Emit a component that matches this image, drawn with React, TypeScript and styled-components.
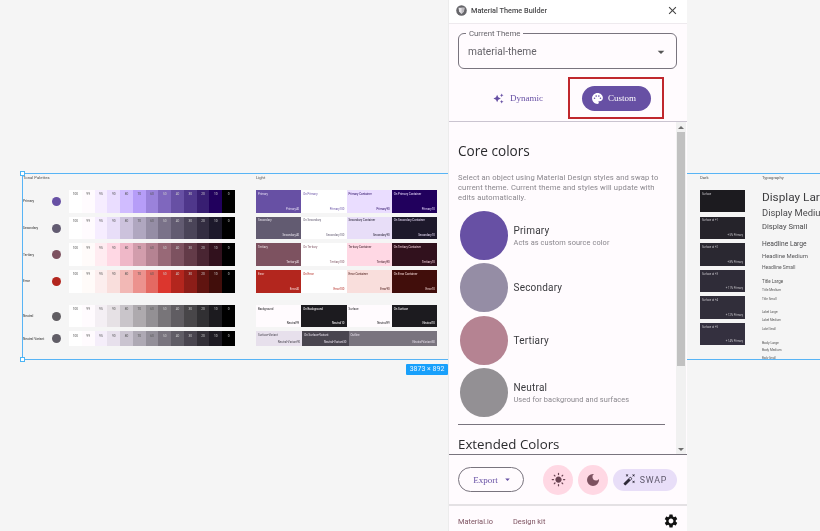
import React from 'react'
import styled, { createGlobalStyle } from 'styled-components'
import {
  MdAutoAwesome,
  MdPalette,
  MdLightMode,
  MdDarkMode,
  MdAutoFixHigh,
  MdSettings,
  MdClose,
  MdArrowDropDown,
} from 'react-icons/md'

const tones = ['100', '99', '95', '90', '80', '70', '60', '50', '40', '30', '20', '10', '0']

type Palette = { name: string; dot: string; colors: string[]; short?: boolean; spaced?: boolean }

const palettes: Palette[] = [
  { name: 'Primary', dot: '#6750a4', colors: ['#ffffff', '#fffbfe', '#f6edff', '#eaddff', '#d0bcff', '#b69df8', '#9a82db', '#7f67be', '#6750a4', '#4f378b', '#381e72', '#21005d', '#000000'] },
  { name: 'Secondary', dot: '#625b71', colors: ['#ffffff', '#fffbfe', '#f6edff', '#e8def8', '#ccc2dc', '#b0a7c0', '#958da5', '#7a7289', '#625b71', '#4a4458', '#332d41', '#1d192b', '#000000'] },
  { name: 'Tertiary', dot: '#7d5260', colors: ['#ffffff', '#fffbfa', '#ffecf1', '#ffd8e4', '#efb8c8', '#d29dac', '#b58392', '#986977', '#7d5260', '#633b48', '#492532', '#31111d', '#000000'] },
  { name: 'Error', dot: '#b3261e', colors: ['#ffffff', '#fffbf9', '#fceeee', '#f9dedc', '#f2b8b5', '#ec928e', '#e46962', '#dc362e', '#b3261e', '#8c1d18', '#601410', '#410e0b', '#000000'] },
  { name: 'Neutral', dot: '#605d62', spaced: true, colors: ['#ffffff', '#fffbfe', '#f4eff4', '#e6e1e5', '#c9c5ca', '#aeaaae', '#939094', '#787579', '#605d62', '#484649', '#313033', '#1c1b1f', '#000000'] },
  { name: 'Neutral Variant', dot: '#605d66', short: true, colors: ['#ffffff', '#fffbfe', '#f5eefa', '#e7e0ec', '#cac4d0', '#aea9b4', '#938f99', '#79747e', '#605d66', '#49454f', '#322f37', '#1d1a22', '#000000'] },
]

type Role = { name: string; tone: string; bg: string; fg: string; wide?: boolean }
type RoleRow = { roles: Role[]; short?: boolean; spaced?: boolean }

const lightRows: RoleRow[] = [
  { roles: [
    { name: 'Primary', tone: 'Primary40', bg: '#6750a4', fg: '#e6def5' },
    { name: 'On Primary', tone: 'Primary100', bg: '#ffffff', fg: '#6750a4' },
    { name: 'Primary Container', tone: 'Primary90', bg: '#eaddff', fg: '#21005d' },
    { name: 'On Primary Container', tone: 'Primary10', bg: '#21005d', fg: '#eaddff' },
  ] },
  { roles: [
    { name: 'Secondary', tone: 'Secondary40', bg: '#625b71', fg: '#e6e2ec' },
    { name: 'On Secondary', tone: 'Secondary100', bg: '#ffffff', fg: '#625b71' },
    { name: 'Secondary Container', tone: 'Secondary90', bg: '#e8def8', fg: '#1d192b' },
    { name: 'On Secondary Container', tone: 'Secondary10', bg: '#1d192b', fg: '#e8def8' },
  ] },
  { roles: [
    { name: 'Tertiary', tone: 'Tertiary40', bg: '#7d5260', fg: '#f0e4e8' },
    { name: 'On Tertiary', tone: 'Tertiary100', bg: '#ffffff', fg: '#7d5260' },
    { name: 'Tertiary Container', tone: 'Tertiary90', bg: '#ffd8e4', fg: '#31111d' },
    { name: 'On Tertiary Container', tone: 'Tertiary10', bg: '#31111d', fg: '#ffd8e4' },
  ] },
  { roles: [
    { name: 'Error', tone: 'Error40', bg: '#b3261e', fg: '#f7dedc' },
    { name: 'On Error', tone: 'Error100', bg: '#ffffff', fg: '#b3261e' },
    { name: 'Error Container', tone: 'Error90', bg: '#f9dedc', fg: '#410e0b' },
    { name: 'On Error Container', tone: 'Error10', bg: '#410e0b', fg: '#f9dedc' },
  ] },
  { spaced: true, roles: [
    { name: 'Background', tone: 'Neutral99', bg: '#fffbfe', fg: '#1c1b1f' },
    { name: 'On Background', tone: 'Neutral10', bg: '#1c1b1f', fg: '#fffbfe' },
    { name: 'Surface', tone: 'Neutral99', bg: '#fffbfe', fg: '#1c1b1f' },
    { name: 'On Surface', tone: 'Neutral10', bg: '#1c1b1f', fg: '#fffbfe' },
  ] },
  { short: true, roles: [
    { name: 'Surface-Variant', tone: 'Neutral-Variant90', bg: '#e7e0ec', fg: '#49454f' },
    { name: 'On Surface-Variant', tone: 'Neutral-Variant30', bg: '#49454f', fg: '#e7e0ec' },
    { name: 'Outline', tone: 'Neutral-Variant50', bg: '#79747e', fg: '#e7e0ec', wide: true },
  ] },
]

const darkSurfaces = [
  { name: 'Surface', tint: '', bg: '#1c1b1f' },
  { name: 'Surface at +1', tint: '+ 5% Primary', bg: '#25232a' },
  { name: 'Surface at +2', tint: '+ 8% Primary', bg: '#2a2831' },
  { name: 'Surface at +3', tint: '+ 11% Primary', bg: '#2f2c38' },
  { name: 'Surface at +4', tint: '+ 12% Primary', bg: '#312e3a' },
  { name: 'Surface at +5', tint: '+ 14% Primary', bg: '#34303f' },
]

const typeScale = [
  { name: 'Display Large', size: 11.8, top: 0, color: '#3d3d3f' },
  { name: 'Display Medium', size: 9.4, top: 3.25, color: '#4a4a4c' },
  { name: 'Display Small', size: 7.6, top: 3.8, color: '#4a4a4c' },
  { name: 'Headline Large', size: 6.7, top: 8.45, color: '#4a4a4c' },
  { name: 'Headline Medium', size: 5.9, top: 4.45, color: '#58585a' },
  { name: 'Headline Small', size: 5, top: 4.45, color: '#58585a' },
  { name: 'Title Large', size: 4.5, top: 9.25, color: '#555' },
  { name: 'Title Medium', size: 3.3, top: 4.3, color: '#555' },
  { name: 'Title Small', size: 3.1, top: 5.2, color: '#555' },
  { name: 'Label Large', size: 3, top: 9.4, color: '#555' },
  { name: 'Label Medium', size: 3, top: 4.6, color: '#555' },
  { name: 'Label Small', size: 2.7, top: 4.8, color: '#555' },
  { name: 'Body Large', size: 3.4, top: 9.5, color: '#555' },
  { name: 'Body Medium', size: 3.2, top: 4.2, color: '#555' },
  { name: 'Body Small', size: 2.8, top: 4.5, color: '#555' },
]

const coreColors = [
  { name: 'Primary', note: 'Acts as custom source color', color: '#6750a4' },
  { name: 'Secondary', note: '', color: '#958da5' },
  { name: 'Tertiary', note: '', color: '#b58392' },
  { name: 'Neutral', note: 'Used for background and surfaces', color: '#939094' },
]

const App: React.FC = () => {
  return (
    <>
      <GlobalStyle />
      <StyledPage>
        <StyledCanvas>
          <StyledFrame>
            <StyledFrameContent>
              <StyledColumn $width={212} $gap={21}>
                <StyledColumnTitle>Tonal Palettes</StyledColumnTitle>
                {palettes.map((p) => (
                  <StyledPaletteRow key={p.name} $short={p.short} $spaced={p.spaced}>
                    <StyledPaletteName>{p.name}</StyledPaletteName>
                    <StyledPaletteDot $color={p.dot} />
                    <StyledTones>
                      {p.colors.map((c, i) => (
                        <StyledTone key={tones[i]} $color={c} $dark={i >= 7}>{tones[i]}</StyledTone>
                      ))}
                    </StyledTones>
                  </StyledPaletteRow>
                ))}
              </StyledColumn>
              <StyledColumn $width={181} $gap={263}>
                <StyledColumnTitle>Light</StyledColumnTitle>
                {lightRows.map((row) => (
                  <StyledRoleRow key={row.roles[0].name} $short={row.short} $spaced={row.spaced}>
                    {row.roles.map((r) => (
                      <StyledRole key={r.name} $bg={r.bg} $fg={r.fg} $wide={r.wide}>
                        <span>{r.name}</span>
                        <StyledRoleTone>{r.tone}</StyledRoleTone>
                      </StyledRole>
                    ))}
                  </StyledRoleRow>
                ))}
              </StyledColumn>
              <StyledColumn $width={45} $gap={17}>
                <StyledColumnTitle>Dark</StyledColumnTitle>
                {darkSurfaces.map((s) => (
                  <StyledSurface key={s.name} $bg={s.bg}>
                    <span>{s.name}</span>
                    <StyledRoleTone>{s.tint}</StyledRoleTone>
                  </StyledSurface>
                ))}
              </StyledColumn>
              <StyledTypeColumn>
                <StyledColumnTitle>Typography</StyledColumnTitle>
                <StyledTypeList>
                  {typeScale.map((t) => (
                    <StyledTypeItem key={t.name} $size={t.size} $top={t.top} $color={t.color}>{t.name}</StyledTypeItem>
                  ))}
                </StyledTypeList>
              </StyledTypeColumn>
            </StyledFrameContent>
            <StyledHandle $place="top" />
            <StyledHandle $place="bottom" />
            <StyledSizeBadge>3873 × 892</StyledSizeBadge>
          </StyledFrame>
        </StyledCanvas>

        <StyledPanel>
          <StyledHeader>
            <StyledLogo viewBox="0 0 24 24">
              <circle cx="12" cy="12" r="11.5" fill="#66666a" />
              <path d="M5.5 6h13l-1.2 8-5.3 5.5L6.700 14z" fill="#e6e4e8" />
              <path d="M12 6h6.500l-1.200 8-5.300 5.500z" fill="#bdbbc0" />
            </StyledLogo>
            <StyledTitle>Material Theme Builder</StyledTitle>
            <StyledClose><MdClose size={13} /></StyledClose>
          </StyledHeader>

          <StyledSelectArea>
            <StyledSelect>
              <StyledSelectLabel>Current Theme</StyledSelectLabel>
              <span>material-theme</span>
              <StyledSelectArrow><MdArrowDropDown size={16} /></StyledSelectArrow>
            </StyledSelect>
          </StyledSelectArea>

          <StyledModes>
            <StyledDynamic>
              <MdAutoAwesome size={11} />
              Dynamic
            </StyledDynamic>
            <StyledCustomHighlight>
              <StyledCustom>
                <MdPalette size={13} />
                Custom
              </StyledCustom>
            </StyledCustomHighlight>
          </StyledModes>

          <StyledScrollArea>
            <StyledScrollContent>
              <StyledHeading>Core colors</StyledHeading>
              <StyledIntro>
                Select an object using Material Design styles and swap to current theme. Current theme and styles will update with edits automatically.
              </StyledIntro>
              <StyledCoreList>
                {coreColors.map((c) => (
                  <StyledCoreRow key={c.name}>
                    <StyledCoreCircle $color={c.color} />
                    <div>
                      <StyledCoreName>{c.name}</StyledCoreName>
                      {c.note && <StyledCoreNote>{c.note}</StyledCoreNote>}
                    </div>
                  </StyledCoreRow>
                ))}
              </StyledCoreList>
              <StyledDivider />
              <StyledExtended>Extended Colors</StyledExtended>
            </StyledScrollContent>
            <StyledScrollBar>
              <StyledScrollArrow><StyledArrowUp /></StyledScrollArrow>
              <StyledScrollTrack><StyledScrollThumb /></StyledScrollTrack>
              <StyledScrollArrow><StyledArrowDown /></StyledScrollArrow>
            </StyledScrollBar>
          </StyledScrollArea>

          <StyledActions>
            <StyledExport>
              Export
              <MdArrowDropDown size={11} />
            </StyledExport>
            <StyledRoundButtons>
              <StyledRoundButton><MdLightMode size={15} color="#6b4453" /></StyledRoundButton>
              <StyledRoundButton><MdDarkMode size={16} /></StyledRoundButton>
              <StyledSwap>
                <MdAutoFixHigh size={13} color="#2e2a38" />
                SWAP
              </StyledSwap>
            </StyledRoundButtons>
          </StyledActions>

          <StyledFooter>
            <StyledFooterLink>Material.io</StyledFooterLink>
            <StyledFooterLink>Design kit</StyledFooterLink>
            <StyledGear><MdSettings size={16} /></StyledGear>
          </StyledFooter>
        </StyledPanel>
      </StyledPage>
    </>
  )
}

const GlobalStyle = createGlobalStyle`
  html, body {
    margin: 0;
    padding: 0;
    background: #f5f5f5;
    overflow: hidden;
  }
  * {
    box-sizing: border-box;
  }
`

// the reference is a scaled screenshot, everything in it is a little soft
const StyledPage = styled.div`
  position: relative;
  width: 820px;
  height: 531px;
  overflow: hidden;
  font-family: Roboto, "Liberation Sans", sans-serif;
  filter: blur(0.3px);
`

const StyledCanvas = styled.div`
  position: absolute;
  inset: 0;
  background: #f5f5f5;
`

const StyledFrame = styled.div`
  position: absolute;
  left: 22px;
  top: 173px;
  width: 830px;
  height: 187px;
  border: 1px solid #58b4f5;
`

const StyledFrameContent = styled.div`
  display: flex;
  height: 100%;
  overflow: hidden;
`

const StyledColumn = styled.div<{ $width: number; $gap: number }>`
  width: ${(p) => p.$width}px;
  margin-right: ${(p) => p.$gap}px;
  flex-shrink: 0;
`

const StyledTypeColumn = styled.div`
  flex-shrink: 0;
`

const StyledColumnTitle = styled.div`
  height: 16px;
  padding-top: 0.5px;
  font-size: 4.2px;
  line-height: 5px;
  color: #555;
`

const StyledPaletteRow = styled.div<{ $short?: boolean; $spaced?: boolean }>`
  display: flex;
  align-items: center;
  height: ${(p) => (p.$short ? 15 : 22.7)}px;
  margin-bottom: 4px;
  margin-top: ${(p) => (p.$spaced ? 12 : 0)}px;
`

const StyledPaletteName = styled.div`
  width: 29px;
  font-size: 3.2px;
  font-weight: 500;
  white-space: nowrap;
  color: #555;
`

const StyledPaletteDot = styled.div<{ $color: string }>`
  width: 9px;
  height: 9px;
  border-radius: 50%;
  background: ${(p) => p.$color};
`

const StyledTones = styled.div`
  display: flex;
  flex: 1;
  height: 100%;
  margin-left: 8px;
`

const StyledTone = styled.div<{ $color: string; $dark: boolean }>`
  flex: 1;
  padding-top: 2.3px;
  text-align: center;
  font-size: 3.2px;
  line-height: 4px;
  background: ${(p) => p.$color};
  color: ${(p) => (p.$dark ? '#ccc' : '#555')};
`

const StyledRoleRow = styled.div<{ $short?: boolean; $spaced?: boolean }>`
  display: flex;
  height: ${(p) => (p.$short ? 15 : 22.7)}px;
  margin-bottom: 4px;
  margin-top: ${(p) => (p.$spaced ? 12 : 0)}px;
`

const StyledRole = styled.div<{ $bg: string; $fg: string; $wide?: boolean }>`
  display: flex;
  flex-direction: column;
  justify-content: space-between;
  flex: ${(p) => (p.$wide ? 2 : 1)};
  min-width: 0;
  padding: 1.8px 2px 2px;
  font-size: 2.9px;
  line-height: 4px;
  white-space: nowrap;
  background: ${(p) => p.$bg};
  color: ${(p) => p.$fg};
`

const StyledRoleTone = styled.span`
  align-self: flex-end;
`

const StyledSurface = styled.div<{ $bg: string }>`
  display: flex;
  flex-direction: column;
  justify-content: space-between;
  height: 22.4px;
  margin-bottom: 4.2px;
  padding: 1.8px 2px 2px;
  font-size: 2.7px;
  line-height: 4px;
  background: ${(p) => p.$bg};
  color: #c6c4c9;
`

const StyledTypeList = styled.div`
  display: flex;
  flex-direction: column;
  white-space: nowrap;
`

const StyledTypeItem = styled.div<{ $size: number; $top: number; $color: string }>`
  font-size: ${(p) => p.$size}px;
  line-height: 1.2;
  margin-top: ${(p) => p.$top}px;
  color: ${(p) => p.$color};
`

const StyledHandle = styled.div<{ $place: 'top' | 'bottom' }>`
  position: absolute;
  left: -3px;
  ${(p) => (p.$place === 'top' ? 'top: -3px;' : 'bottom: -3px;')}
  width: 5px;
  height: 5px;
  background: #fff;
  border: 1px solid #4db5f5;
`

const StyledSizeBadge = styled.div`
  position: absolute;
  left: 383px;
  top: 190px;
  width: 42px;
  height: 11px;
  border-radius: 1px;
  background: #18a0fb;
  color: #e8f5ff;
  font-size: 7px;
  line-height: 11px;
  text-align: center;
  white-space: nowrap;
`

const StyledPanel = styled.div`
  position: absolute;
  left: 448px;
  top: 0;
  width: 239px;
  height: 531px;
  display: flex;
  flex-direction: column;
  background: #fffbfe;
  border-left: 1px solid #ececec;
  color: #1c1b1f;
`

const StyledHeader = styled.div`
  display: flex;
  align-items: center;
  height: 24px;
  padding: 0 8px 3px 7px;
  background: #fff;
  border-bottom: 1px solid #eeeaee;
  flex-shrink: 0;
`

const StyledLogo = styled.svg`
  width: 11px;
  height: 11px;
  margin-right: 4px;
`

const StyledTitle = styled.div`
  flex: 1;
  font-size: 7.3px;
  font-weight: 500;
  color: #48484a;
`

const StyledClose = styled.div`
  display: flex;
  color: #444;
`

const StyledSelectArea = styled.div`
  padding: 9px 10px 0 9px;
  flex-shrink: 0;
`

const StyledSelect = styled.div`
  position: relative;
  display: flex;
  align-items: center;
  height: 36px;
  padding: 0 9px;
  border: 1px solid #79747e;
  border-radius: 6px;
  font-size: 10.2px;
  color: #66646a;
`

const StyledSelectLabel = styled.div`
  position: absolute;
  left: 7px;
  top: -5px;
  padding: 0 3px;
  background: #fffbfe;
  font-size: 7.8px;
  line-height: 10px;
  color: #66646a;
`

const StyledSelectArrow = styled.div`
  position: absolute;
  right: 7px;
  top: 10px;
  display: flex;
  color: #555;
`

const StyledModes = styled.div`
  display: flex;
  align-items: center;
  height: 53px;
  padding: 8px 0 2px 43px;
  border-bottom: 1px solid #cac4d0;
  flex-shrink: 0;
`

const StyledDynamic = styled.div`
  display: flex;
  align-items: center;
  gap: 6px;
  width: 76px;
  padding-left: 1px;
  font-family: "Liberation Serif", serif;
  font-size: 9px;
  color: #6750a4;
`

const StyledCustomHighlight = styled.div`
  display: flex;
  align-items: center;
  justify-content: center;
  width: 96px;
  height: 42px;
  border: 2px solid #c0272d;
`

const StyledCustom = styled.div`
  display: flex;
  align-items: center;
  justify-content: center;
  gap: 4px;
  width: 69px;
  height: 25px;
  padding-right: 5px;
  border-radius: 13px;
  background: #6750a4;
  color: #fff;
  font-family: "Liberation Serif", serif;
  font-size: 9px;
`

const StyledScrollArea = styled.div`
  display: flex;
  flex: 1;
  min-height: 0;
`

const StyledScrollContent = styled.div`
  flex: 1;
  min-width: 0;
  overflow: hidden;
  padding-left: 9px;
`

const StyledScrollBar = styled.div`
  display: flex;
  flex-direction: column;
  width: 10px;
  margin-right: 1px;
  background: #f1f1f1;
  flex-shrink: 0;
`

const StyledScrollArrow = styled.div`
  display: flex;
  align-items: center;
  justify-content: center;
  height: 10px;
  flex-shrink: 0;
`

const StyledArrowUp = styled.div`
  border-left: 3px solid transparent;
  border-right: 3px solid transparent;
  border-bottom: 3px solid #6f6f6f;
`

const StyledArrowDown = styled.div`
  border-left: 3px solid transparent;
  border-right: 3px solid transparent;
  border-top: 3px solid #6f6f6f;
`

const StyledScrollTrack = styled.div`
  flex: 1;
  padding: 0 1px;
`

const StyledScrollThumb = styled.div`
  height: 234px;
  background: #c1c1c1;
`

const StyledHeading = styled.h2`
  margin: 19px 0 0;
  font-size: 13.6px;
  line-height: 20px;
  font-weight: 400;
  font-family: "Open Sans", Roboto, sans-serif;
  color: #2b2b2e;
`

const StyledIntro = styled.p`
  margin: 12px 0 0;
  width: 204px;
  font-size: 7.6px;
  line-height: 10px;
  letter-spacing: 0.12px;
  color: #8a878d;
`

const StyledCoreList = styled.div`
  display: flex;
  flex-direction: column;
  gap: 3.4px;
  margin-top: 8px;
`

const StyledCoreRow = styled.div`
  display: flex;
  align-items: center;
  gap: 5.5px;
`

const StyledCoreCircle = styled.div<{ $color: string }>`
  width: 48.5px;
  height: 49px;
  margin-left: 1.5px;
  border-radius: 50%;
  background: ${(p) => p.$color};
`

const StyledCoreName = styled.div`
  font-size: 10px;
  line-height: 13px;
  letter-spacing: 0.2px;
  color: #3a3a3e;
`

const StyledCoreNote = styled.div`
  font-size: 7.4px;
  line-height: 11px;
  letter-spacing: 0.08px;
  color: #8a878d;
`

const StyledDivider = styled.div`
  width: 207px;
  margin-top: 7px;
  border-top: 1px solid #79747e;
`

const StyledExtended = styled.h3`
  margin: 10px 0 0;
  font-size: 13.3px;
  line-height: 18px;
  font-weight: 400;
  font-family: "Open Sans", Roboto, sans-serif;
  color: #2b2b2e;
`

const StyledActions = styled.div`
  display: flex;
  align-items: center;
  justify-content: space-between;
  height: 52px;
  padding: 0 10px 0 9px;
  border-top: 1px solid #79747e;
  border-bottom: 2px solid #e4e1e4;
  flex-shrink: 0;
`

const StyledExport = styled.div`
  display: flex;
  align-items: center;
  justify-content: center;
  gap: 4.5px;
  width: 66px;
  height: 25px;
  padding-left: 4.5px;
  border: 1px solid #79747e;
  border-radius: 13px;
  font-family: "Liberation Serif", serif;
  font-size: 9px;
  color: #6750a4;
`

const StyledRoundButtons = styled.div`
  display: flex;
  align-items: center;
  gap: 5px;
`

const StyledRoundButton = styled.div`
  display: flex;
  align-items: center;
  justify-content: center;
  width: 30px;
  height: 30px;
  border-radius: 50%;
  background: #ffd8e4;
  color: #7d5260;
`

const StyledSwap = styled.div`
  display: flex;
  align-items: center;
  justify-content: center;
  gap: 4px;
  width: 64px;
  height: 22px;
  border-radius: 11px;
  background: #e8def8;
  color: #5f596c;
  font-size: 8.8px;
  letter-spacing: 0.8px;
`

const StyledFooter = styled.div`
  display: flex;
  align-items: center;
  height: 25px;
  gap: 20px;
  padding: 5px 8px 0 9px;
  flex-shrink: 0;
`

const StyledFooterLink = styled.div`
  font-size: 7.4px;
  color: #7d5260;
`

const StyledGear = styled.div`
  display: flex;
  margin-left: auto;
  color: #111;
`

export default App
